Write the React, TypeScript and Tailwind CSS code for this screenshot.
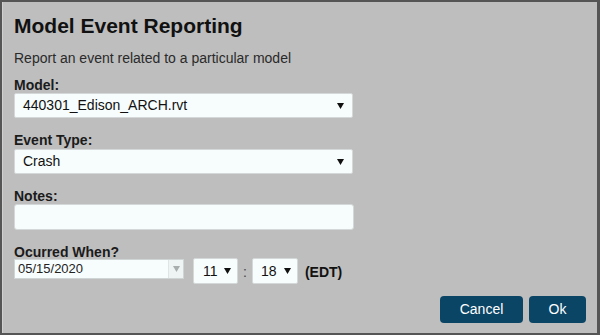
const font = { fontFamily: '"Liberation Sans", Arial, sans-serif' };

const Caret = ({ color = "#111" }: { color?: string }) => (
    <svg width="7" height="6" viewBox="0 0 7 6">
        <path d="M0 0 L7 0 L3.5 6 Z" fill={color} />
    </svg>
);

const Select = ({ value, className }: { value: string; className: string }) => (
    <div className={`flex items-center justify-between bg-[#f7fdfd] border border-[#d4d8d8] rounded-[2px] text-[14px] text-[#111] ${className}`}>
        <span>{value}</span>
        <Caret />
    </div>
);

const Label = ({ children }: { children: string }) => (
    <div className="text-[14px] font-bold text-[#1b1b1b] leading-[13px]">{children}</div>
);

export default function App() {
    return (
        <div style={font} className="w-[600px] h-[335px] bg-[#555] pt-[2px] pl-[2px] pr-[3px] pb-[2px]">
            <div className="w-full h-full bg-[#bebebe] border-l border-[#d0d0d0] pl-[11px] pr-[10px] flex flex-col">
                <h1 className="text-[21px] font-bold text-[#111] mt-[12px] leading-[24px]">Model Event Reporting</h1>
                <p className="text-[14px] text-[#2a2a2a] mt-[12px] leading-[16px]">
                    Report an event related to a particular model
                </p>

                <div className="mt-[13px]">
                    <Label>Model:</Label>
                    <Select value="440301_Edison_ARCH.rvt" className="w-[339px] h-[25px] pl-[8px] pr-[8px] mt-[1px]" />
                </div>

                <div className="mt-[16px]">
                    <Label>Event Type:</Label>
                    <Select value="Crash" className="w-[339px] h-[25px] pl-[8px] pr-[8px] mt-[2px]" />
                </div>

                <div className="mt-[16px]">
                    <Label>Notes:</Label>
                    <div className="w-[340px] h-[26px] mt-[1px] bg-[#f7fdfd] border border-[#d4d8d8] rounded-[3px]" />
                </div>

                <div className="mt-[16px]">
                    <Label>Ocurred When?</Label>
                    <div className="flex items-start mt-[0px]">
                        <div className="flex h-[20px] border border-[#cfd4d4] bg-[#f7fdfd]">
                            <div className="w-[153px] text-[13px] text-[#222] pl-[3px] leading-[18px]">05/15/2020</div>
                            <div className="w-[15px] border-l border-[#dfe4e4] bg-[#eef4f4] flex items-center justify-center">
                                <Caret color="#a8aeae" />
                            </div>
                        </div>
                        <Select value="11" className="w-[45px] h-[26px] pl-[9px] pr-[6px] ml-[9px] mt-[-1px]" />
                        <span className="text-[14px] text-[#444] mx-[5px] mt-[3px]">:</span>
                        <Select value="18" className="w-[46px] h-[26px] pl-[8px] pr-[6px] mt-[-1px]" />
                        <span className="text-[14px] font-bold text-[#111] ml-[7px] mt-[3px]">(EDT)</span>
                    </div>
                </div>

                <div className="flex justify-end gap-[6px] mt-auto mb-[10px] pr-[1px]">
                    <button className="w-[83px] h-[27px] bg-[#0b4566] text-white text-[14px] rounded-[4px]">Cancel</button>
                    <button className="w-[57px] h-[27px] bg-[#0b4566] text-white text-[14px] rounded-[4px]">Ok</button>
                </div>
            </div>
        </div>
    );
}
